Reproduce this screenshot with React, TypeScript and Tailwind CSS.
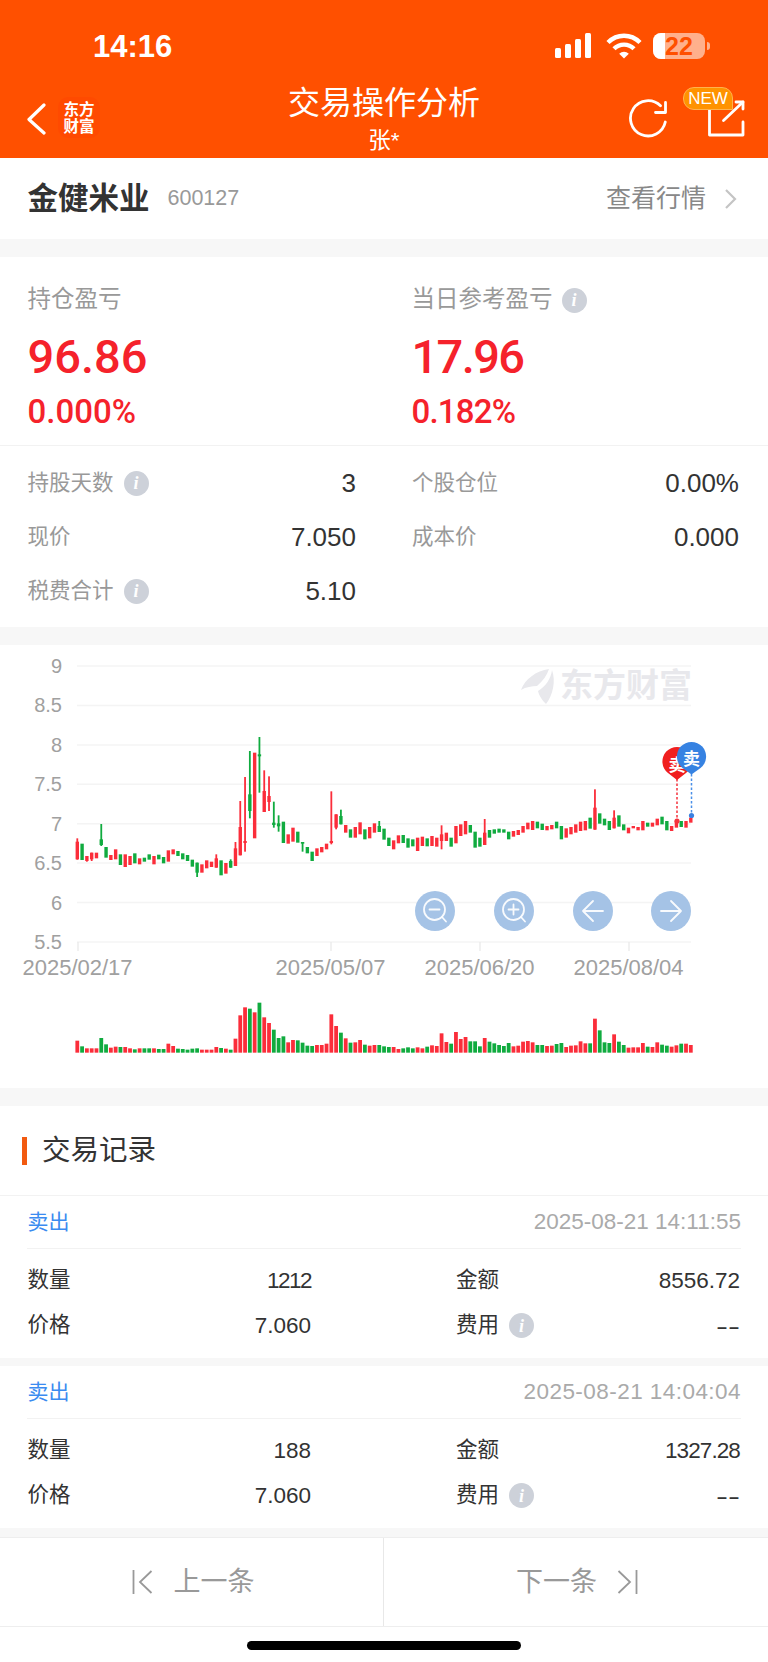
const FONT = "font-['Liberation_Sans','Noto_Sans_CJK_SC',sans-serif]";

// [colour, body top, body bottom, wick top, wick bottom] in 3x crop units
type Candle = [string, number, number, number?, number?];

const candles: Candle[] = [
  ["r", 602, 655, 592, 656], ["g", 608, 657], ["r", 645, 660, 645, 662], ["r", 635, 655, 635, 660], ["r", 635, 652],
  ["g", 595, 612, 549, 615], ["g", 618, 650], ["r", 642, 657], ["r", 625, 655], ["g", 640, 672],
  ["r", 640, 678], ["r", 645, 672], ["g", 637, 667], ["r", 652, 670], ["g", 650, 662],
  ["g", 640, 656], ["r", 645, 670], ["g", 641, 655], ["g", 648, 667], ["r", 628, 662],
  ["r", 625, 640], ["g", 630, 645], ["g", 637, 655], ["g", 642, 660], ["g", 656, 677],
  ["g", 665, 695, 665, 708], ["r", 670, 695], ["r", 658, 682], ["r", 662, 678], ["r", 652, 680, 640, 680],
  ["g", 658, 703], ["r", 666, 698], ["g", 660, 680, 655, 680], ["r", 622, 675, 603, 675], ["r", 558, 643, 480, 643],
  ["r", 600, 606, 408, 632], ["g", 460, 510, 330, 532], ["r", 335, 592], ["g", 340, 346, 288, 455], ["r", 450, 513, 388, 513],
  ["r", 465, 483, 406, 510], ["g", 545, 552, 482, 560], ["g", 547, 556, 523, 572], ["g", 542, 606], ["r", 580, 608],
  ["r", 560, 602], ["g", 572, 605], ["g", 603, 608, 603, 632], ["g", 618, 637], ["g", 632, 660],
  ["r", 622, 645], ["r", 618, 634], ["r", 608, 625], ["r", 600, 606, 451, 610], ["r", 520, 560, 520, 565],
  ["g", 525, 550, 506, 550], ["r", 552, 575], ["g", 565, 590], ["r", 558, 590], ["r", 544, 580],
  ["g", 565, 595], ["r", 558, 592], ["r", 547, 575], ["g", 555, 573, 540, 573], ["g", 563, 596],
  ["g", 590, 615], ["r", 598, 625], ["r", 583, 607], ["g", 582, 606], ["g", 592, 620],
  ["g", 595, 616], ["r", 590, 630], ["r", 587, 615], ["g", 592, 616], ["r", 585, 615],
  ["r", 590, 617], ["r", 580, 600, 553, 625], ["r", 575, 600], ["g", 590, 617], ["r", 555, 607],
  ["r", 550, 585], ["r", 540, 580], ["g", 552, 575], ["g", 572, 620], ["g", 590, 617],
  ["r", 575, 612, 534, 612], ["g", 567, 590], ["g", 565, 578], ["g", 563, 575], ["g", 565, 575],
  ["g", 572, 595], ["r", 570, 587], ["r", 567, 582], ["r", 555, 575], ["r", 545, 565],
  ["r", 540, 567], ["g", 542, 562], ["g", 548, 567], ["r", 555, 568], ["r", 552, 565],
  ["g", 542, 562], ["g", 555, 595], ["r", 562, 590], ["r", 558, 580], ["r", 550, 575],
  ["r", 542, 570], ["r", 540, 568], ["g", 530, 563], ["r", 500, 566, 445, 566], ["g", 517, 548],
  ["g", 533, 553], ["g", 540, 567], ["r", 530, 562, 508, 562], ["g", 523, 557], ["g", 550, 568],
  ["r", 560, 577], ["r", 555, 562], ["r", 558, 568], ["r", 540, 568], ["g", 545, 557],
  ["r", 545, 557], ["r", 533, 553], ["g", 527, 550], ["g", 540, 568], ["r", 555, 570],
  ["r", 540, 560], ["g", 540, 558], ["r", 540, 560], ["r", 530, 545],
];

const volumes = [
  1199, 1216, 1222, 1222, 1222, 1191, 1210, 1220, 1217, 1218, 1218, 1222, 1225, 1222, 1222, 1222, 1222, 1224, 1224, 1208,
  1215, 1223, 1224, 1226, 1223, 1222, 1226, 1226, 1226, 1218, 1221, 1223, 1226, 1193, 1123, 1099, 1103, 1114, 1085, 1129,
  1146, 1166, 1191, 1186, 1204, 1197, 1198, 1205, 1214, 1215, 1212, 1212, 1208, 1120, 1155, 1175, 1192, 1205, 1204, 1197,
  1211, 1214, 1212, 1212, 1216, 1218, 1218, 1224, 1222, 1219, 1222, 1219, 1222, 1217, 1213, 1215, 1177, 1203, 1208, 1173,
  1194, 1188, 1201, 1201, 1216, 1191, 1202, 1207, 1212, 1215, 1206, 1216, 1214, 1202, 1200, 1204, 1212, 1212, 1215, 1214,
  1209, 1206, 1218, 1214, 1213, 1201, 1207, 1207, 1133, 1168, 1204, 1206, 1180, 1202, 1212, 1220, 1219, 1219, 1206, 1217,
  1218, 1204, 1211, 1214, 1217, 1213, 1208, 1208, 1212,
];

const RED = "#fb2d3a";
const GREEN = "#10ab3f";
const toY = (z: number) => 640 + z / 3;
const toX = (i: number) => 77.3 + i * 4.793;

function Info() {
  return (
    <span className="flex h-[25px] w-[25px] shrink-0 items-center justify-center rounded-full bg-[#cdd1d9] font-['Liberation_Serif',serif] text-[18px] font-bold italic leading-none text-white">
      i
    </span>
  );
}

function StatusIcons() {
  return (
    <div className="flex items-center">
      <svg width="40" height="26" viewBox="0 0 40 26" className="mr-[12px]" fill="#fff">
        <rect x="1" y="15" width="6" height="10" rx="1.5" />
        <rect x="11" y="11" width="6" height="14" rx="1.5" />
        <rect x="21" y="6" width="6" height="19" rx="1.5" />
        <rect x="31" y="0" width="6" height="25" rx="1.5" />
      </svg>
      <svg width="36" height="28" viewBox="0 0 36 28" className="mr-[11px]" fill="none" stroke="#fff" strokeWidth="4.4">
        <path d="M2 10.5C11 1.5 25 1.5 34 10.5" />
        <path d="M8 16.8C13.5 11.2 22.5 11.2 28 16.8" />
        <path d="M13.2 21.8C16 19 20 19 22.8 21.8L18 26.6Z" fill="#fff" stroke="none" />
      </svg>
      <div className="relative h-[26px] w-[52px] overflow-hidden rounded-[8px] bg-white/55">
        <div className="absolute inset-y-0 left-0 w-[12px] bg-white" />
        <span className="absolute inset-0 flex items-center justify-center text-[25px] font-bold leading-none text-[#ff5000]">
          22
        </span>
      </div>
      <div className="ml-[2px] h-[8px] w-[3px] rounded-r-full bg-white/55" />
    </div>
  );
}

function NavBar() {
  return (
    <div className="relative flex h-[74px] justify-between">
      <div className="flex items-start pl-[27px] pt-[13px]">
        <svg width="20" height="34" viewBox="0 0 20 34" fill="none" stroke="#fff" strokeWidth="3.2" strokeLinecap="round" strokeLinejoin="round" className="mr-[11px] mt-[5px]">
          <path d="M17 3L2 17.5L17 31" />
        </svg>
        <div className="flex h-[41px] w-[42px] flex-col items-center justify-center rounded-[10px] bg-[#ff4a00] text-[15.5px] font-bold leading-[17px] text-white">
          <span>东方</span>
          <span>财富</span>
        </div>
      </div>
      <div className="absolute inset-x-0 top-0 flex flex-col items-center">
        <span className="mt-[1px] text-[32px] leading-[36px] text-white">交易操作分析</span>
        <span className="mt-[6px] text-[22.5px] leading-[28px] text-white">张*</span>
      </div>
      <div className="relative h-[74px] w-[140px]">
        <svg width="140" height="74" viewBox="628 84 140 74" className="absolute inset-0" fill="none" stroke="#fff" strokeWidth="2.8" strokeLinecap="round" strokeLinejoin="round">
          <path d="M665.3 122A17.6 17.6 0 1 1 660.5 105.8" />
          <path d="M655.5 112.5H665.5V102.5" />
          <path d="M709.5 108V135H743V122" />
          <path d="M723.5 120.5L743 102" />
          <path d="M736 102H743V109" />
        </svg>
        <span className="absolute left-[55px] top-[3px] flex h-[23px] w-[50px] items-center justify-center rounded-[11px] rounded-br-none border border-[#ffb24d] bg-[#ff9300] text-[17px] leading-none text-white">
          NEW
        </span>
      </div>
    </div>
  );
}

function StockRow() {
  return (
    <div className="flex h-[81px] items-center justify-between bg-white pl-[27.5px] pr-[31px]">
      <div className="flex items-center">
        <span className="text-[30.5px] font-bold text-[#333]">金健米业</span>
        <span className="ml-[18px] text-[21.5px] text-[#999]">600127</span>
      </div>
      <div className="flex items-center">
        <span className="text-[25px] text-[#888]">查看行情</span>
        <svg width="13" height="22" viewBox="0 0 13 22" fill="none" stroke="#c4c4c4" strokeWidth="2.2" className="ml-[18px]">
          <path d="M2 2L11 11L2 20" />
        </svg>
      </div>
    </div>
  );
}

function Profit({ label, value, pct, info, narrow }: { label: string; value: string; pct: string; info?: boolean; narrow?: boolean }) {
  return (
    <div>
      <div className="flex h-[28px] items-center text-[23.5px] text-[#999]">
        {label}
        {info && <span className="ml-[9px]"><Info /></span>}
      </div>
      <div className={`mt-[15px] font-['Roboto',sans-serif] text-[47px] font-medium leading-[56px] text-[#f5222b] ${narrow ? "tracking-[-1.6px]" : ""}`}>{value}</div>
      <div className={`mt-[9px] font-['Roboto',sans-serif] text-[33px] font-medium leading-[36px] text-[#f5222b] ${narrow ? "tracking-[-0.8px]" : ""}`}>{pct}</div>
    </div>
  );
}

function Stat({ label, value, info }: { label: string; value?: string; info?: boolean }) {
  return (
    <div className="flex h-[54px] items-center justify-between">
      <div className="flex items-center text-[21.5px] text-[#999]">
        {label}
        {info && <span className="ml-[10px]"><Info /></span>}
      </div>
      <span className="text-[26px] text-[#333]">{value}</span>
    </div>
  );
}

function Summary() {
  return (
    <div className="bg-white">
      <div className="grid h-[189px] grid-cols-[384px_1fr] border-b border-[#f2f2f2] pl-[27.5px] pt-[29px]">
        <Profit label="持仓盈亏" value="96.86" pct="0.000%" />
        <Profit label="当日参考盈亏" value="17.96" pct="0.182%" info narrow />
      </div>
      <div className="grid grid-cols-[328.5px_327px] gap-x-[56px] pb-[9px] pl-[27.5px] pr-[29px] pt-[10px]">
        <Stat label="持股天数" value="3" info />
        <Stat label="个股仓位" value="0.00%" />
        <Stat label="现价" value="7.050" />
        <Stat label="成本价" value="0.000" />
        <Stat label="税费合计" value="5.10" info />
      </div>
    </div>
  );
}

function Chart() {
  const gridYs = [665, 704.4, 743.9, 783.3, 822.7, 862.1, 901.6, 941];
  const labels = ["9", "8.5", "8", "7.5", "7", "6.5", "6", "5.5"];
  const ticks: [number, string][] = [
    [78, "2025/02/17"],
    [331, "2025/05/07"],
    [480, "2025/06/20"],
    [629, "2025/08/04"],
  ];
  return (
    <svg width="768" height="443" viewBox="0 644 768 443" className="block" fontFamily="'Liberation Sans','Noto Sans CJK SC',sans-serif">
      {gridYs.map((y, i) => (
        <g key={y}>
          <line x1="77" x2="691" y1={y} y2={y} stroke="#f4f4f4" strokeWidth="1.5" />
          <text x="62" y={y + 7} textAnchor="end" fontSize="20" fill="#a0a0a0">{labels[i]}</text>
        </g>
      ))}
      {ticks.map(([x, t]) => (
        <g key={t}>
          <line x1={x} x2={x} y1="941" y2="950" stroke="#e8e8e8" strokeWidth="1.2" />
          <text x={x - 0.5} y="973.5" textAnchor="middle" fontSize="22" fill="#a0a0a0">{t}</text>
        </g>
      ))}

      {/* watermark */}
      <path d="M549 668C536 670 525 678 521 689C526 686 532 685 537 685C543 680 547 674 549 668Z" fill="#e8e8ec" />
      <path d="M552 669C551 678 545 686 538 690C539 695 543 700 546 703C553 694 556 680 552 669Z" fill="#e8e8ec" />
      <text x="560" y="696" fontSize="33" fontWeight="700" fill="#e8e8ec">东方财富</text>

      {candles.map((c, i) => {
        const fill = c[0] === "r" ? RED : GREEN;
        const x = toX(i);
        return (
          <g key={i} fill={fill}>
            {c[3] !== undefined && (
              <rect x={x - 0.9} width="1.8" y={toY(c[3])} height={(c[4]! - c[3]) / 3} />
            )}
            <rect x={x - 1.7} width="3.4" y={toY(c[1])} height={(c[2] - c[1]) / 3} />
            <rect x={x - 1.9} width="3.8" y={toY(volumes[i])} height={(1235 - volumes[i]) / 3} />
          </g>
        );
      })}

      {/* trade markers */}
      <line x1="677" x2="677" y1="778" y2="820" stroke="#f5323c" strokeWidth="1.5" strokeDasharray="2.5 2" />
      <circle cx="677" cy="820" r="2.6" fill="#f5323c" />
      <path d="M677 779L668 772A14.6 14.6 0 1 1 686 772Z" fill="#f01f1f" />
      <text x="677" y="770" textAnchor="middle" fontSize="17" fontWeight="700" fill="#fff">卖</text>
      <line x1="691.5" x2="691.5" y1="773" y2="814" stroke="#4a8fe8" strokeWidth="1.5" strokeDasharray="2.5 2" />
      <circle cx="691.5" cy="814.5" r="2.6" fill="#3a80e0" />
      <path d="M691.5 773.5L682.5 767A14.6 14.6 0 1 1 700.5 767Z" fill="#3682e2" />
      <text x="691.5" y="764" textAnchor="middle" fontSize="17" fontWeight="700" fill="#fff">卖</text>
    </svg>
  );
}

function ChartButton({ className, children }: { className: string; children: React.ReactNode }) {
  return (
    <div className={`absolute top-[246px] flex h-[40px] w-[40px] items-center justify-center rounded-full bg-[#a5c3e6] ${className}`}>
      <svg width="40" height="40" viewBox="0 0 40 40" fill="none" stroke="#fff" strokeWidth="1.8" strokeOpacity="0.92" strokeLinecap="round" strokeLinejoin="round">
        {children}
      </svg>
    </div>
  );
}

function ChartPanel() {
  return (
    <div className="relative h-[443px] bg-white">
      <Chart />
      <ChartButton className="left-[415px]">
        <circle cx="19.5" cy="18.5" r="10.5" />
        <path d="M14.5 18.5H24.5M27 26L31 30.5" />
      </ChartButton>
      <ChartButton className="left-[494px]">
        <circle cx="19.5" cy="18.5" r="10.5" />
        <path d="M14.5 18.5H24.5M19.5 13.5V23.5M27 26L31 30.5" />
      </ChartButton>
      <ChartButton className="left-[573px]">
        <path d="M30 20H10M20 10L10 20L20 30" />
      </ChartButton>
      <ChartButton className="left-[651px]">
        <path d="M10 20H30M20 10L30 20L20 30" />
      </ChartButton>
    </div>
  );
}

function TradeField({ label, value, info, valueClass }: { label: string; value: string; info?: boolean; valueClass?: string }) {
  return (
    <div className="flex h-[45px] items-center justify-between">
      <div className="flex items-center text-[21.5px] text-[#333]">
        {label}
        {info && <span className="ml-[10px]"><Info /></span>}
      </div>
      <span className={`text-[22.5px] text-[#333] ${valueClass ?? ""}`}>{value}</span>
    </div>
  );
}

function TradeRecord({ time, timeClass, qty, qtyClass, amount, amountClass }: {
  time: string;
  timeClass?: string;
  qty: string;
  qtyClass?: string;
  amount: string;
  amountClass?: string;
}) {
  return (
    <div className="h-[162px] bg-white">
      <div className="mx-[27px] flex h-[53px] items-center justify-between border-b border-[#f2f2f2] pl-[0.5px]">
        <span className="text-[21px] text-[#3b8bf0]">卖出</span>
        <span className={`text-[22.5px] text-[#aaa] ${timeClass ?? ""}`}>{time}</span>
      </div>
      <div className="grid grid-cols-[283.5px_284px] gap-x-[145px] pl-[27.5px] pt-[9px]">
        <TradeField label="数量" value={qty} valueClass={qtyClass} />
        <TradeField label="金额" value={amount} valueClass={amountClass} />
        <TradeField label="价格" value="7.060" />
        <TradeField label="费用" value="--" info valueClass="origin-right translate-y-[1px] scale-x-[1.6]" />
      </div>
    </div>
  );
}

function Pager() {
  return (
    <div className="grid h-[90px] grid-cols-2 border-y border-[#eeeeee] bg-white text-[27px] text-[#999]">
      <div className="flex items-center justify-center border-r border-[#e8e8e8] pl-[3px]">
        <svg width="21" height="26" viewBox="0 0 21 26" fill="none" stroke="#999" strokeWidth="1.8" className="mr-[21px]">
          <path d="M1.5 1V25M19.5 2L8 13L19.5 24" />
        </svg>
        上一条
      </div>
      <div className="flex items-center justify-center pl-[2px]">
        下一条
        <svg width="21" height="26" viewBox="0 0 21 26" fill="none" stroke="#999" strokeWidth="1.8" className="ml-[20px]">
          <path d="M19.5 1V25M1.5 2L13 13L1.5 24" />
        </svg>
      </div>
    </div>
  );
}

export default function App() {
  return (
    <div className={`h-[1662px] w-[768px] overflow-hidden bg-white ${FONT}`}>
      <div className="h-[158px] bg-[#ff5000]">
        <div className="flex h-[84px] items-center justify-between pl-[93px] pr-[58px] pt-[8px]">
          <span className="text-[31px] font-bold leading-none text-white">14:16</span>
          <StatusIcons />
        </div>
        <NavBar />
      </div>
      <div className="flex flex-col gap-[18px] bg-[#f7f7f7]">
        <StockRow />
        <Summary />
        <ChartPanel />
      </div>
      <div className="bg-[#f7f7f7] pt-[18px]">
        <div className="flex h-[90px] items-center border-b border-[#f2f2f2] bg-white pl-[22px]">
          <div className="h-[28px] w-[5px] bg-[#f25a10]" />
          <span className="ml-[15px] text-[28.5px] text-[#333]">交易记录</span>
        </div>
      </div>
      <div className="flex flex-col gap-[8px] bg-[#f7f7f7]">
        <TradeRecord time="2025-08-21 14:11:55" qty="1212" qtyClass="tracking-[-1.5px]" amount="8556.72" />
        <TradeRecord time="2025-08-21 14:04:04" timeClass="tracking-[0.45px]" qty="188" amount="1327.28" amountClass="tracking-[-0.9px]" />
      </div>
      <div className="bg-[#f7f7f7] pt-[9px]">
        <Pager />
      </div>
      <div className="flex h-[37px] items-center justify-center bg-white">
        <div className="h-[9px] w-[274px] rounded-full bg-black" />
      </div>
    </div>
  );
}
